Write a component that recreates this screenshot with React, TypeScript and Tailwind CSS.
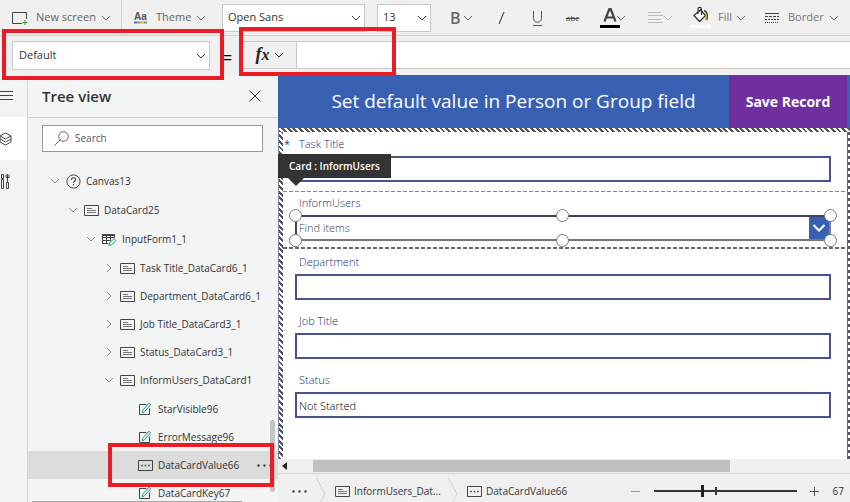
import type { ReactNode } from "react";
import clsx from "clsx";

type IconKind = "canvas" | "card" | "form" | "edit" | "combo";

type TreeNode = {
  name: string;
  icon: IconKind;
  state?: "open" | "closed";
  selected?: boolean;
  children?: TreeNode[];
};

const tree: TreeNode[] = [
  {
    name: "Canvas13",
    icon: "canvas",
    state: "open",
    children: [
      {
        name: "DataCard25",
        icon: "card",
        state: "open",
        children: [
          {
            name: "InputForm1_1",
            icon: "form",
            state: "open",
            children: [
              { name: "Task Title_DataCard6_1", icon: "card", state: "closed" },
              { name: "Department_DataCard6_1", icon: "card", state: "closed" },
              { name: "Job Title_DataCard3_1", icon: "card", state: "closed" },
              { name: "Status_DataCard3_1", icon: "card", state: "closed" },
              {
                name: "InformUsers_DataCard1",
                icon: "card",
                state: "open",
                children: [
                  { name: "StarVisible96", icon: "edit" },
                  { name: "ErrorMessage96", icon: "edit" },
                  { name: "DataCardValue66", icon: "combo", selected: true },
                  { name: "DataCardKey67", icon: "edit" },
                ],
              },
            ],
          },
        ],
      },
    ],
  },
];

const indents = ["pl-[22px]", "pl-[40px]", "pl-[58px]", "pl-[76px]", "pl-[94px]"];

function Chevron({ className }: { className?: string }) {
  return (
    <svg viewBox="0 0 10 10" className={clsx("pointer-events-none size-[10px] shrink-0", className)} fill="none" stroke="currentColor">
      <path d="M1 3l4 4 4-4" />
    </svg>
  );
}

function NodeIcon({ kind }: { kind: IconKind }) {
  if (kind === "canvas") {
    return (
      <svg viewBox="0 0 15 15" className="size-[15px] shrink-0" fill="none" stroke="#444">
        <circle cx="7.5" cy="7.5" r="6.6" />
        <path d="M5.4 5.9c0-1.3.9-2.1 2.1-2.1s2.1.8 2.1 1.9c0 1.5-2.1 1.6-2.1 3.3" strokeWidth="1.1" />
        <path d="M7.5 10.2v1.2" strokeWidth="1.2" />
      </svg>
    );
  }
  if (kind === "form") {
    return (
      <svg viewBox="0 0 15 15" className="size-[15px] shrink-0" fill="none" stroke="#444">
        <path d="M.5 2.5h12v3M.5 2.5v9h6M.5 5.5h12M.5 8.5h8M4.5 2.5v9M8.5 2.5v6" />
        <path d="M.5 3h12" strokeWidth="2" />
        <path d="M7 13.5l.7-2.7 4.4-4.3 2 2-4.4 4.3z" fill="#d6f1ee" stroke="#2aa198" />
      </svg>
    );
  }
  if (kind === "edit") {
    return (
      <svg viewBox="0 0 15 15" className="size-[15px] shrink-0" fill="none" stroke="#444">
        <path d="M8.500 2.500h-7v10h10V6.500" />
        <path d="M4 11l.7-2.800 6.300-7 1.700 1.500-6.300 7.200z" fill="#d6f1ee" stroke="#2aa198" />
      </svg>
    );
  }
  return (
    <svg viewBox="0 0 15 15" className="size-[15px] shrink-0" fill="none" stroke="#444">
      <path d="M.5 2.5h14v10H.5z" />
      {kind === "card" ? (
        <path d="M3 5.5h5M3 7.5h9M3 9.5h9" stroke="#777" />
      ) : (
        <path d="M3.2 7.5h1.6M6.700 7.5h1.6M10.200 7.5h1.6" strokeWidth="1.6" />
      )}
    </svg>
  );
}

function Dots() {
  return (
    <svg viewBox="0 0 15 15" className="size-[15px] shrink-0" fill="#444">
      <circle cx="1.5" cy="7.5" r="1.2" />
      <circle cx="7.5" cy="7.5" r="1.2" />
      <circle cx="13.5" cy="7.5" r="1.2" />
    </svg>
  );
}

function Highlight({ className }: { className: string }) {
  return <div className={clsx("pointer-events-none absolute z-20 border-4 border-[#ec1c24]", className)} />;
}

function Picker({ label, value, className }: { label: string; value: string; className: string }) {
  return (
    <div className={clsx("relative flex shrink-0 items-center", className)}>
      <select
        aria-label={label}
        defaultValue={value}
        className="size-full appearance-none border border-[#c8c8c8] bg-white text-[11px] text-[#333]"
      >
        <option>{value}</option>
      </select>
      <Chevron className="absolute right-1 text-[#333]" />
    </div>
  );
}

function Tool({ label, className, children }: { label?: string; className?: string; children: ReactNode }) {
  return (
    <button type="button" aria-label={label} className={clsx("flex shrink-0 items-center", className)}>
      {children}
    </button>
  );
}

function Toolbar() {
  return (
    <div className="flex h-9 shrink-0 items-center border-b border-[#d0d0d0] text-[11px] text-[#666]">
      <Tool className="h-full w-[122px] gap-[5px] border-r border-[#d4d4d4] pl-3">
        <svg viewBox="0 0 16 14" className="h-[14px] w-4" fill="none" stroke="#444">
          <path d="M14.5 8V1.500H.500v11H10" />
          <path d="M13 9v5M10.500 11.500h5" stroke="#2e9e3f" />
        </svg>
        <span className="pl-[3px]">New screen</span>
        <Chevron />
      </Tool>
      <Tool className="w-[100px] gap-[5px] pl-3">
        <svg viewBox="0 0 13 13" className="size-[13px]">
          <text x="0" y="9" fontFamily="Liberation Sans" fontWeight="700" fontSize="10" fill="#555">
            Aa
          </text>
          <path d="M0 11.500h3" stroke="#3d7ac7" strokeWidth="2" />
          <path d="M3.300 11.500h3" stroke="#d36a3a" strokeWidth="2" />
          <path d="M6.600 11.500h3" stroke="#e0ab3a" strokeWidth="2" />
          <path d="M9.900 11.500h3" stroke="#5b9c5b" strokeWidth="2" />
        </svg>
        <span className="pl-1">Theme</span>
        <Chevron />
      </Tool>
      <Picker label="Font" value="Open Sans" className="h-7 w-[143px] [&>select]:pl-[5px]" />
      <Picker label="Font size" value="13" className="ml-3 h-7 w-[54px] [&>select]:pl-[5px]" />
      <Tool label="Bold" className="ml-[19px] w-10 gap-[2px]">
        <span className="text-base font-semibold">B</span>
        <Chevron />
      </Tool>
      <Tool label="Italic" className="ml-2 w-[34px]">
        <svg viewBox="0 0 8 14" className="h-[14px] w-2" stroke="#555">
          <path d="M1 13L6 1" strokeWidth="1.200" />
        </svg>
      </Tool>
      <Tool label="Underline" className="w-[34px]">
        <svg viewBox="0 0 12 16" className="h-4 w-3" fill="none" stroke="#555">
          <path d="M1.500 1v7.500c0 5 8 5 8 0V1M1 15.500h9" />
        </svg>
      </Tool>
      <Tool label="Strikethrough" className="w-[34px]">
        <span className="text-[8px] text-[#444] line-through">abc</span>
      </Tool>
      <Tool label="Font color" className="w-12">
        <svg viewBox="0 0 20 24" className="h-6 w-5" fill="none" stroke="#444">
          <path d="M4.500 15.500L9.300 3h1.400l4.800 12.500M6.300 11.500h7.400" strokeWidth="2.200" />
          <path d="M0 20.500h20" stroke="#000" strokeWidth="3" />
        </svg>
        <Chevron className="-ml-1" />
      </Tool>
      <Tool label="Align" className="w-[43px] text-[#bbb]">
        <svg viewBox="0 0 15 13" className="h-[13px] w-[15px]" stroke="currentColor">
          <path d="M0 1.500h13M0 4.500h15M0 8.500h13M0 11.500h15" />
        </svg>
        <Chevron />
      </Tool>
      <Tool className="w-[74px] gap-1">
        <svg viewBox="0 0 20 24" className="h-6 w-5" fill="none" stroke="#333">
          <path d="M3 9.500L9.500 4l5 5.500-6 6z" fill="#fff" strokeWidth="1.300" />
          <path d="M7 8V3C7 .800 10.500.800 10.500 3v6" strokeWidth="1.200" />
          <path d="M13 4.500c3 .800 4 4 3 9.500" strokeWidth="1.300" />
          <path d="M15 7.500v7" stroke="#b5a800" strokeWidth="1.500" />
          <path d="M0 20.500h20" stroke="#fff" strokeWidth="3" />
        </svg>
        <span className="pl-[3px] text-[#777]">Fill</span>
        <Chevron />
      </Tool>
      <Tool className="gap-[5px]">
        <svg viewBox="0 0 14 12" className="h-3 w-[14px]" stroke="#444">
          <path d="M0 1.500h14" />
          <path d="M0 4.500h14" strokeDasharray="3 1" />
          <path d="M0 7.500h14" strokeDasharray="2 1" />
          <path d="M0 10.500h14" strokeDasharray="1 1" />
        </svg>
        <span className="pl-1 text-[#777]">Border</span>
        <Chevron />
      </Tool>
    </div>
  );
}

function FormulaBar() {
  return (
    <div className="flex h-[39px] shrink-0 items-start pt-[5px]">
      <div className="relative ml-3">
        <Picker label="Property" value="Default" className="h-[29px] w-[198px] [&>select]:pl-[6px]" />
        <Highlight className="-top-3 -right-[14px] -bottom-[10px] -left-[10px]" />
      </div>
      <span className="w-[33px] pt-1 pl-3 text-lg leading-6 text-black">=</span>
      <div className="relative flex h-7 flex-1 border-y border-[#c8c8c8]">
        <button type="button" aria-label="Insert function" className="flex w-[54px] items-center justify-center gap-1 border-r border-[#c8c8c8] text-[#222]">
          <span className="font-['Liberation_Serif',serif] text-lg leading-5 font-bold italic">
            f<span className="text-base">x</span>
          </span>
          <Chevron />
        </button>
        <input aria-label="Formula" className="min-w-0 flex-1 bg-white px-2 text-xs outline-none" />
        <Highlight className="-top-[15px] -bottom-2 -left-1 w-[157px]" />
      </div>
    </div>
  );
}

function Rail() {
  return (
    <nav className="flex w-7 shrink-0 flex-col border-r border-[#d4d4d4] text-[#444]">
      <button type="button" aria-label="Menu" className="flex h-[42px] items-center">
        <svg viewBox="0 0 13 10" className="h-[10px] w-[13px]" stroke="currentColor">
          <path d="M0 .5h13M0 4.5h13M0 8.5h13" />
        </svg>
      </button>
      <button type="button" aria-label="Tree view" className="flex h-[43px] items-center bg-white">
        <svg viewBox="0 0 12 14" className="h-[14px] w-3" fill="none" stroke="currentColor">
          <path d="M0 4L5.500 1 11 4 5.500 7zM0 4v3l5.500 3L11 7V4M0 7v3l5.500 3 5.500-3V7" />
        </svg>
      </button>
      <button type="button" aria-label="Advanced tools" className="flex h-[43px] items-center">
        <svg viewBox="0 0 10 15" className="h-[15px] w-[10px]" fill="none" stroke="currentColor">
          <path d="M1.500.500h2v4h-2zM1.500 5.500h2v9h-2zM7.500 0v8M6 .500v3h3v-3M6.500 8.500h2v6h-2z" />
        </svg>
      </button>
    </nav>
  );
}

function TreeList({ nodes, level = 0 }: { nodes: TreeNode[]; level?: number }) {
  return (
    <ul className={level > 0 ? "pt-px" : undefined}>
      {nodes.map((node) => (
        <li key={node.name}>
          <div className={clsx("relative flex h-7 items-center", node.selected && "bg-[#dcdcdc]")}>
            <button type="button" className={clsx("flex h-full flex-1 items-center text-left", indents[level])}>
              <span className="flex w-4">
                {node.state && <Chevron className={clsx("text-[#888]", node.state === "closed" && "-rotate-90")} />}
              </span>
              <NodeIcon kind={node.icon} />
              <span className="pl-[5px] text-[10px] whitespace-nowrap">{node.name}</span>
            </button>
            {node.selected && (
              <>
                <button type="button" aria-label="More actions" className="mr-[6px]">
                  <Dots />
                </button>
                <Highlight className="-top-2 right-1 -bottom-2 left-20" />
              </>
            )}
          </div>
          {node.children && <TreeList nodes={node.children} level={level + 1} />}
        </li>
      ))}
    </ul>
  );
}

function TreePanel() {
  return (
    <aside className="relative flex w-[250px] shrink-0 flex-col text-[#333]">
      <header className="flex h-[43px] shrink-0 items-center justify-between border-b border-[#d0d0d0] pr-[17px] pl-[14px]">
        <h2 className="text-[15px] font-semibold text-[#333]">Tree view</h2>
        <button type="button" aria-label="Close">
          <svg viewBox="0 0 12 12" className="size-3" stroke="#333">
            <path d="M.5.5l11 11M11.5.5l-11 11" />
          </svg>
        </button>
      </header>
      <div className="mx-[14px] mt-[7px] mb-[15px] flex h-[27px] w-[221px] shrink-0 items-center gap-[6px] border border-[#999] bg-white pl-[11px]">
        <svg viewBox="0 0 15 15" className="size-[15px]" fill="none" stroke="#7f4a7c">
          <circle cx="9.5" cy="5.5" r="4.8" />
          <path d="M6 9L.5 14.5" />
        </svg>
        <input aria-label="Search" placeholder="Search" className="min-w-0 flex-1 text-[10px] outline-none placeholder:text-[#555]" />
      </div>
      <TreeList nodes={tree} />
      <div className="absolute right-[3px] bottom-[10px] h-[72px] w-[5px] rounded-sm bg-[#c4c4c4]" />
      <div className="absolute bottom-0 left-1 h-px w-[210px] bg-[#aaa]" />
    </aside>
  );
}

function Field({ id, label, value, required }: { id: string; label: string; value?: string; required?: boolean }) {
  return (
    <div className="relative pt-1 pr-4 pb-[9px] pl-3">
      {required && <span className="absolute left-px text-[11px] leading-4 text-[#2b3a80]">*</span>}
      <label htmlFor={id} className="mb-1 block pl-1 text-[11px] leading-4 font-light text-[#1c2a72]">
        {label}
      </label>
      <input id={id} defaultValue={value} className="block h-[26px] w-full border-2 border-[#46538c] bg-white px-[2px] text-[11px] font-light text-black outline-none" />
    </div>
  );
}

const handles = [
  "-top-2 -left-2",
  "-top-2 left-1/2 -ml-[7px]",
  "-top-2 -right-2",
  "-bottom-2 -left-2",
  "-bottom-2 left-1/2 -ml-[7px]",
  "-bottom-2 -right-2",
];

function SelectedCard() {
  return (
    <div className="relative h-[59px] pr-4 pl-3">
      <svg className="pointer-events-none absolute inset-0 h-[59px] w-full" stroke="#666" strokeDasharray="4 2">
        <line x1="0" y1=".5" x2="100%" y2=".5" stroke="#888" />
        <line x1="0" y1="57" x2="100%" y2="57" strokeWidth="2" />
      </svg>
      <label htmlFor="inform-users" className="mb-1 block pt-1 pl-1 text-[11px] leading-4 font-light text-[#1c2a72]">
        InformUsers
      </label>
      <div className="relative flex h-[26px] border-2 border-[#3d4270] border-r-[#7c7f95] border-b-[#777]">
        <input id="inform-users" placeholder="Find items" className="min-w-0 flex-1 bg-white px-[2px] text-[11px] font-light outline-none placeholder:text-[#444]" />
        <button type="button" aria-label="Open list" className="flex w-5 items-center justify-center bg-[#3860b2]">
          <svg viewBox="0 0 14 10" className="h-[10px] w-[14px]" fill="none" stroke="#fff" strokeWidth="2">
            <path d="M1.5 2L7 7.5 12.5 2" />
          </svg>
        </button>
        {handles.map((place) => (
          <span key={place} className={clsx("absolute size-[13px] rounded-full border border-[#777] bg-white", place)} />
        ))}
      </div>
      <div role="tooltip" className="absolute -top-[37px] -left-[5px] bg-[#333] px-[11px] text-[10px] leading-6 font-semibold text-white">
        Card : InformUsers
        <svg viewBox="0 0 16 8" className="absolute top-full left-[10px] h-2 w-4" fill="#333">
          <path d="M0 0h16L8 8z" />
        </svg>
      </div>
    </div>
  );
}

function Canvas() {
  return (
    <section className="flex min-h-0 flex-1 flex-col bg-white">
      <header className="flex h-[53px] shrink-0 items-stretch bg-[#3860b2] pr-[3px] text-white">
        <h1 className="flex flex-1 items-center justify-center pl-5 text-[19px]">Set default value in Person or Group field</h1>
        <button type="button" className="w-[118px] bg-[#6f2f9f] text-sm font-bold">
          Save Record
        </button>
      </header>
      <div className="flex min-h-0 flex-1 flex-col border-l border-[#8087ad]">
        <div className="h-1 shrink-0 bg-[repeating-linear-gradient(45deg,#555_0_2px,#fff_2px_4px)]" />
        <div className="flex min-h-0 flex-1">
          <div className="w-1 shrink-0 bg-[repeating-linear-gradient(45deg,#555_0_2px,#fff_2px_4px)]" />
          <form className="min-w-0 flex-1">
            <Field id="task-title" label="Task Title" required />
            <SelectedCard />
            <Field id="department" label="Department" />
            <Field id="job-title" label="Job Title" />
            <Field id="status" label="Status" value="Not Started" />
          </form>
          <div className="w-[3px] shrink-0 border-l border-[#667] bg-[repeating-linear-gradient(180deg,#556_0_3px,#fff_3px_6px)]" />
        </div>
      </div>
    </section>
  );
}

function CrumbArrow() {
  return (
    <svg viewBox="0 0 10 28" className="h-7 w-[10px] shrink-0" fill="none" stroke="#d0d0d0">
      <path d="M0 0l9 17-6 11" />
    </svg>
  );
}

function StatusBar() {
  return (
    <footer className="flex h-[29px] shrink-0 items-center border-t border-[#d4d4d4] pt-[6px] text-[10px] text-[#333]">
      <nav aria-label="Breadcrumb" className="flex flex-1 items-center">
        <button type="button" aria-label="Show parents" className="pr-[9px] pl-[14px]">
          <Dots />
        </button>
        <CrumbArrow />
        <a href="#card" className="flex items-center gap-1 pl-[9px]">
          <NodeIcon kind="card" />
          <span className="w-[94px]">InformUsers_Dat...</span>
        </a>
        <CrumbArrow />
        <a href="#value" className="flex items-center gap-1 pl-[9px]">
          <NodeIcon kind="combo" />
          DataCardValue66
        </a>
      </nav>
      <div className="flex items-center pr-[6px]">
        <button type="button" aria-label="Zoom out" className="mr-[14px]">
          <svg viewBox="0 0 9 9" className="size-[9px]" stroke="#999">
            <path d="M0 4.5h9" />
          </svg>
        </button>
        <div className="relative flex h-3 w-[143px] items-center">
          <input
            type="range"
            aria-label="Zoom"
            defaultValue={34}
            className="h-[2px] w-full appearance-none bg-[#333] [&::-webkit-slider-thumb]:h-3 [&::-webkit-slider-thumb]:w-[3px] [&::-webkit-slider-thumb]:appearance-none [&::-webkit-slider-thumb]:bg-[#222]"
          />
          <span className="absolute left-[61px] h-2 w-[2px] bg-[#333]" />
        </div>
        <button type="button" aria-label="Zoom in" className="mr-[14px] ml-[13px]">
          <svg viewBox="0 0 9 9" className="size-[9px]" stroke="#555">
            <path d="M0 4.5h9M4.5 0v9" />
          </svg>
        </button>
        <span>67</span>
      </div>
    </footer>
  );
}

export default function App() {
  return (
    <div className="flex h-screen flex-col overflow-hidden bg-[#f0f0f0] font-['Open_Sans',sans-serif]">
      <Toolbar />
      <FormulaBar />
      <div className="flex min-h-0 flex-1 bg-[#f3f4f4]">
        <Rail />
        <TreePanel />
        <main className="flex min-w-0 flex-1 flex-col bg-[#f0f0f0]">
          <Canvas />
          <div className="flex h-[14px] shrink-0 items-center">
            <button type="button" aria-label="Scroll left" className="w-[35px] pl-1">
              <svg viewBox="0 0 5 8" className="h-2 w-[5px]" fill="#222">
                <path d="M5 0v8L0 4z" />
              </svg>
            </button>
            <div className="mr-[120px] h-3 flex-1 bg-[#bfc1c1]" />
          </div>
          <StatusBar />
        </main>
      </div>
    </div>
  );
}
